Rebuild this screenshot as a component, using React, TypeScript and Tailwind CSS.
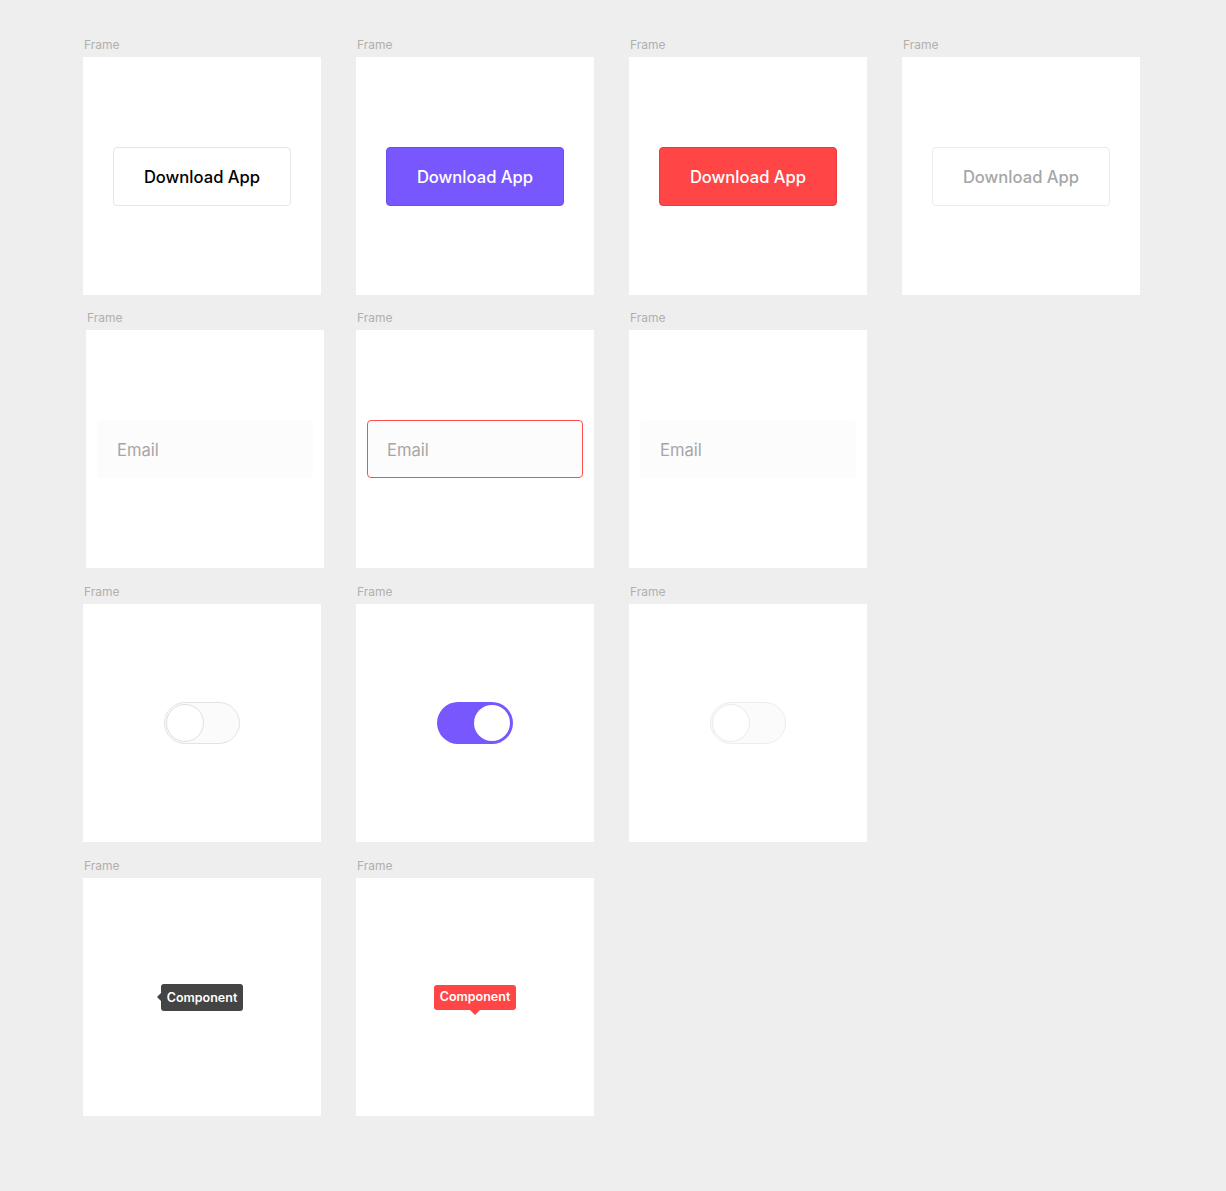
const font = { fontFamily: "Inter, 'Noto Sans', sans-serif" };

const Frame = ({ children, className = "" }: { children?: React.ReactNode; className?: string }) => (
  <div className={`flex flex-col ${className}`}>
    <div className="h-4 text-[12px] leading-4 text-[#b0b0b0] pl-[1px]">Frame</div>
    <div className="mt-[4px] w-[238px] h-[238px] bg-white flex items-center justify-center">{children}</div>
  </div>
);

const Button = ({ variant }: { variant: "default" | "primary" | "danger" | "disabled" }) => {
  const styles = {
    default: "bg-white border-[#e6e6e6] text-black",
    primary: "bg-[#7857ff] border-[#6b4ef0] text-white",
    danger: "bg-[#ff4545] border-[#e83b3b] text-white",
    disabled: "bg-white border-[#ebebeb] text-[#a6a6a6]",
  }[variant];
  return (
    <button className={`w-[178px] h-[59px] pt-[3px] rounded-[4px] border text-[16.6px] font-medium ${styles}`}>
      Download App
    </button>
  );
};

const Input = ({ error }: { error?: boolean }) => (
  <div
    className={`w-[216px] h-[58px] pt-[3px] rounded-[4px] bg-[#fcfcfc] flex items-center pl-[19px] text-[16.6px] text-[#a6a6a6] border ${
      error ? "border-[#ff4d4d]" : "border-[#fcfcfc]"
    }`}
  >
    Email
  </div>
);

const Toggle = ({ on, faint }: { on?: boolean; faint?: boolean }) => {
  if (on) {
    return (
      <div className="w-[76px] h-[42px] rounded-full bg-[#7857ff] flex items-center justify-end pr-[3px]">
        <div className="w-[36px] h-[36px] rounded-full bg-white" />
      </div>
    );
  }
  return (
    <div
      className={`w-[76px] h-[42px] rounded-full bg-[#fbfbfb] border flex items-center pl-[1px] ${
        faint ? "border-[#ededed]" : "border-[#e3e3e3]"
      }`}
    >
      <div className={`w-[38px] h-[38px] rounded-full bg-white border ${faint ? "border-[#ebebeb]" : "border-[#e0e0e0]"}`} />
    </div>
  );
};

export default function App() {
  return (
    <div className="min-h-[1191px] bg-[#eeeeee] pt-[37px] pl-[83px]" style={font}>
      <div className="flex flex-col">
        <div className="flex gap-[35px]">
          <Frame><Button variant="default" /></Frame>
          <Frame><Button variant="primary" /></Frame>
          <Frame><Button variant="danger" /></Frame>
          <Frame><Button variant="disabled" /></Frame>
        </div>
        <div className="flex gap-[35px] mt-[15px]">
          <Frame className="ml-[3px] -mr-[3px]"><Input /></Frame>
          <Frame><Input error /></Frame>
          <Frame><Input /></Frame>
        </div>
        <div className="flex gap-[35px] mt-[16px]">
          <Frame><Toggle /></Frame>
          <Frame><Toggle on /></Frame>
          <Frame><Toggle faint /></Frame>
        </div>
        <div className="flex gap-[35px] mt-[16px]">
          <Frame>
            <div className="relative h-[27px] pt-[2px] px-[6px] rounded-[3px] bg-[#444444] flex items-center text-white text-[12.5px] font-semibold">
              <span className="absolute -left-[4px] top-1/2 -translate-y-1/2 w-0 h-0 border-y-[4px] border-y-transparent border-r-[4px] border-r-[#444444]" />
              Component
            </div>
          </Frame>
          <Frame>
            <div className="relative h-[25px] pt-[1px] px-[6px] rounded-[3px] bg-[#ff4545] flex items-center text-white text-[12.5px] font-semibold">
              Component
              <span className="absolute left-1/2 -translate-x-1/2 -bottom-[5px] w-0 h-0 border-x-[5px] border-x-transparent border-t-[5px] border-t-[#ff4545]" />
            </div>
          </Frame>
        </div>
      </div>
    </div>
  );
}
